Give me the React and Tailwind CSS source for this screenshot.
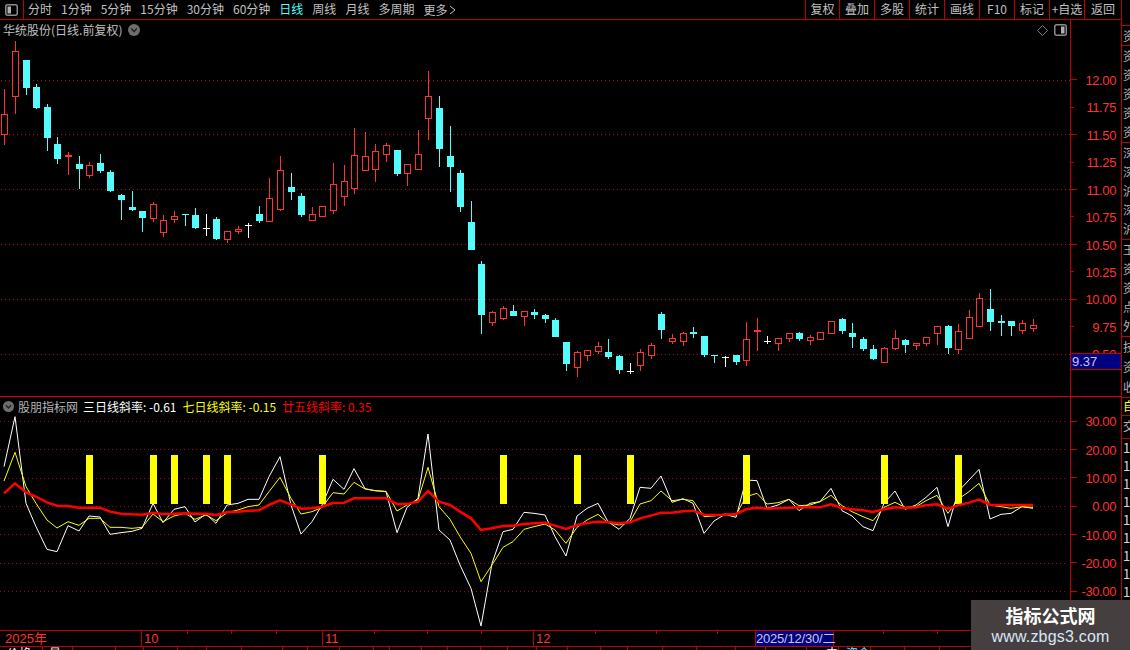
import React from 'react';

const CJK = { fontFamily: '"Noto Sans CJK SC", "Liberation Sans", sans-serif' };

// [kind, wick top, body top, body bottom, wick bottom], in thirds of a pixel
const CANDLES = [
  ['r', 267, 343, 404, 435], ['r', 123, 153, 290, 342], ['c', 180, 180, 264, 285], ['c', 252, 261, 324, 327],
  ['c', 312, 321, 414, 453], ['c', 411, 432, 477, 492], ['f', 456, 465, 471, 525], ['c', 468, 492, 507, 567],
  ['r', 486, 495, 528, 534], ['c', 462, 489, 513, 519], ['c', 510, 516, 573, 576], ['c', 582, 585, 600, 660],
  ['c', 573, 621, 630, 633], ['c', 633, 633, 654, 696], ['r', 606, 612, 657, 666], ['r', 645, 660, 699, 711],
  ['r', 633, 648, 660, 669], ['c', 642, 642, 645, 678], ['c', 624, 645, 684, 687], ['w', 642, 684, 687, 708],
  ['c', 651, 657, 717, 720], ['r', 693, 693, 720, 729], ['r', 678, 687, 696, 702], ['w', 669, 675, 678, 714],
  ['c', 618, 642, 663, 669], ['r', 534, 594, 666, 666], ['r', 468, 510, 630, 633], ['c', 519, 561, 576, 600],
  ['c', 579, 588, 645, 651], ['r', 621, 642, 663, 663], ['r', 618, 618, 651, 651], ['r', 489, 552, 633, 642],
  ['r', 495, 543, 591, 618], ['r', 384, 465, 567, 582], ['r', 396, 468, 513, 513], ['r', 432, 453, 510, 546],
  ['r', 429, 435, 465, 486], ['c', 450, 450, 522, 528], ['r', 492, 492, 522, 558], ['r', 390, 462, 510, 510],
  ['r', 213, 288, 357, 420], ['c', 288, 324, 447, 501], ['c', 378, 468, 501, 576], ['c', 510, 519, 621, 636],
  ['c', 603, 666, 750, 750], ['c', 783, 792, 945, 1002], ['r', 933, 936, 969, 978], ['r', 918, 924, 957, 960],
  ['c', 915, 933, 948, 948], ['r', 933, 933, 951, 978], ['c', 927, 936, 945, 957], ['c', 942, 945, 957, 969],
  ['c', 954, 960, 1011, 1011], ['c', 1026, 1026, 1092, 1113], ['r', 1053, 1056, 1103, 1131], ['r', 1051, 1051, 1068, 1083],
  ['r', 1026, 1038, 1056, 1062], ['c', 1017, 1056, 1071, 1077], ['c', 1065, 1068, 1110, 1122], ['w', 1089, 1113, 1116, 1122],
  ['r', 1047, 1057, 1097, 1113], ['r', 1030, 1036, 1067, 1077], ['c', 936, 942, 990, 1017], ['r', 1002, 1015, 1026, 1032],
  ['r', 997, 1000, 1026, 1038], ['c', 981, 996, 1002, 1014], ['c', 1008, 1008, 1065, 1071], ['c', 1065, 1065, 1068, 1089],
  ['w', 1068, 1071, 1074, 1101], ['c', 1065, 1065, 1086, 1095], ['r', 966, 1018, 1083, 1098], ['f', 954, 990, 996, 1053],
  ['w', 1008, 1023, 1026, 1032], ['r', 1015, 1015, 1031, 1053], ['r', 1000, 1000, 1016, 1026], ['c', 996, 1000, 1017, 1023],
  ['r', 1005, 1012, 1023, 1035], ['r', 997, 997, 1019, 1019], ['r', 963, 963, 1001, 1001], ['c', 954, 957, 993, 1002],
  ['c', 969, 999, 1011, 1044], ['c', 1011, 1017, 1047, 1053], ['c', 1035, 1047, 1077, 1080], ['r', 1042, 1045, 1088, 1088],
  ['r', 990, 1015, 1046, 1050], ['c', 1017, 1020, 1035, 1059], ['r', 1029, 1030, 1038, 1050], ['r', 1011, 1012, 1032, 1038],
  ['r', 978, 979, 1003, 1035], ['c', 975, 978, 1044, 1062], ['r', 972, 994, 1050, 1062], ['r', 930, 952, 1016, 1016],
  ['r', 879, 895, 980, 980], ['c', 867, 927, 966, 993], ['c', 945, 963, 969, 1008], ['c', 963, 963, 978, 1008],
  ['r', 960, 970, 993, 1002], ['r', 957, 976, 987, 996],
];

const WHITE = [230, 80, 340, 410, 478, 485, 407, 423, 378, 381, 433, 428, 424, 415, 340, 398, 358, 350, 396, 372, 400, 345, 340, 328, 328, 260, 200, 345, 432, 395, 345, 268, 298, 236, 296, 302, 305, 428, 352, 325, 132, 420, 450, 525, 595, 708, 520, 425, 418, 367, 370, 375, 440, 498, 378, 355, 340, 395, 418, 385, 292, 295, 258, 337, 326, 340, 430, 393, 373, 382, 270, 272, 355, 345, 328, 362, 340, 335, 295, 362, 378, 410, 422, 340, 303, 358, 345, 322, 292, 410, 305, 270, 238, 387, 373, 370, 350, 355];
const YELLOW = [273, 187, 290, 340, 390, 414, 395, 406, 385, 385, 412, 412, 415, 412, 372, 395, 378, 370, 388, 375, 392, 368, 360, 350, 345, 305, 262, 325, 372, 365, 352, 308, 312, 277, 297, 302, 304, 363, 345, 330, 232, 350, 388, 440, 490, 575, 525, 472, 455, 418, 410, 402, 420, 460, 412, 390, 373, 398, 405, 395, 342, 332, 303, 332, 328, 332, 380, 378, 372, 375, 320, 310, 342, 338, 328, 347, 345, 335, 316, 347, 365, 380, 392, 352, 337, 352, 350, 332, 316, 370, 328, 305, 280, 345, 350, 355, 350, 352];
const RED = [310, 280, 307, 320, 337, 347, 348, 353, 353, 353, 365, 371, 373, 374, 368, 372, 371, 370, 371, 371, 375, 367, 365, 362, 361, 345, 331, 343, 356, 355, 350, 339, 338, 325, 325, 325, 325, 342, 342, 335, 303, 335, 345, 365, 385, 420, 415, 408, 407, 402, 400, 398, 407, 417, 405, 399, 395, 396, 400, 397, 385, 377, 368, 368, 364, 362, 374, 375, 374, 372, 358, 353, 356, 355, 353, 352, 352, 352, 343, 354, 358, 361, 366, 358, 352, 354, 352, 346, 343, 356, 346, 338, 329, 344, 345, 345, 345, 345];
const SIGNALS = [8, 14, 16, 19, 21, 30, 47, 54, 59, 70, 83, 90];

const PERIODS = ['分时', '1分钟', '5分钟', '15分钟', '30分钟', '60分钟', '日线', '周线', '月线', '多周期'];
const ACTIONS = [['复权', 'w-[34px]'], ['叠加', 'w-[35px]'], ['多股', 'w-[35px]'], ['统计', 'w-[35px]'], ['画线', 'w-[35px]'], ['F10', 'w-[35px]'], ['标记', 'w-[35px]'], ['+自选', 'w-[35px]'], ['返回', 'w-[37px]']];
const PRICES = ['12.00', '11.75', '11.50', '11.25', '11.00', '10.75', '10.50', '10.25', '10.00', '9.75', '9.50'];
const LEVELS = ['30.00', '20.00', '10.00', '0.00', '-10.00', '-20.00', '-30.00'];
const TOP_TICKS = [187, 231, 276, 374, 427, 481, 595, 656, 717, 883, 937];
const CELLS = [43, 30, 43, 28, 34, 29, 35, 41, 25, 32, 34, 16, 32, 26, 33, 27, 29, 31, 33, 27, 35, 34, 39, 30, 41, 32, 32, 34, 35];
const BOTTOM_TEXT = { 0: ['价格', 'pl-[7px] text-white'], 1: ['量', 'pl-[6px] text-white'], 25: ['中', 'pl-[19px] text-white'], 26: ['资金', 'pl-[7px] text-[#54fcfc]'] };
const STRIP = [
  { text: ['资'], cls: 'h-[20px]' },
  { text: ['资', '资', '资', '资', '资'], cls: 'h-[97px]' },
  { text: ['深', '深', '沪', '深', '沪'], cls: 'h-[97px]' },
  { text: ['王', '资', '资', '点', '外'], cls: 'h-[97px]' },
  { text: ['技', '资', '收'], cls: 'h-[61px]' },
];

const candleX = (i) => Math.round(4.3 + 10.6 * i);
const points = (ys) => ys.map((y, i) => `${candleX(i)},${390 + y / 3}`).join(' ');

const PanelIcon = ({ side }) => (
  <svg width="13" height="12" viewBox="0 0 13 12">
    <rect x="0.75" y="0.75" width="11.5" height="10.5" rx="2" fill="none" stroke="#8c8c8c" strokeWidth="1.5" />
    <rect x={side === 'left' ? 2.5 : 7} y="2.5" width="3.5" height="7" fill="#b0b0b0" />
  </svg>
);

const ChevronDot = ({ size = 12 }) => (
  <svg width={size} height={size} viewBox="0 0 12 12">
    <circle cx="6" cy="6" r="6" fill="#6e6e6e" />
    <path d="M3.2 4.6 L6 7.6 L8.8 4.6" fill="none" stroke="#222" strokeWidth="1.4" />
  </svg>
);

const Candle = ({ candle, index }) => {
  const [kind, high, top, bottom, low] = candle;
  const x = candleX(index);
  const y1 = Math.round(top / 3);
  const y2 = Math.round(bottom / 3);
  const color = kind === 'c' ? '#54fcfc' : kind === 'w' ? '#ffffff' : '#ff3232';
  const wickTop = Math.round(high / 3);
  const wickBottom = Math.round(low / 3);
  return (
    <g>
      <rect x={x} y={wickTop} width="1" height={Math.max(wickBottom - wickTop, 1)} fill={color} />
      {kind === 'r' ? (
        <rect x={x - 3 + 0.5} y={y1 + 0.5} width="6" height={Math.max(y2 - y1 - 1, 1)} fill="#000" stroke={color} />
      ) : (
        <rect x={x - 3} y={y1} width="7" height={Math.max(y2 - y1, kind === 'f' ? 2 : 1)} fill={color} />
      )}
    </g>
  );
};

const Toolbar = () => (
  <div className="flex h-[20px] border-b border-[#c00000] text-[12px] leading-[18px] text-[#c0c0c0]" style={CJK}>
    <div className="flex w-[24px] items-center justify-center border-r border-[#c00000]">
      <PanelIcon side="left" />
    </div>
    <div className="ml-[4px] flex flex-1 gap-[9px]">
      {PERIODS.map((p) => (
        <span key={p} className={p === '日线' ? 'text-[#54fcfc]' : ''}>{p}</span>
      ))}
      <span className="flex items-center gap-[2px]">
        更多
        <svg width="7" height="10" viewBox="0 0 7 10"><path d="M1 1 L6 5 L1 9" fill="none" stroke="#c0c0c0" /></svg>
      </span>
    </div>
    {ACTIONS.map(([label, w]) => (
      <div key={label} className={`${w} border-l border-[#c00000] text-center whitespace-nowrap`}>{label}</div>
    ))}
  </div>
);

const MainChart = () => (
  <div className="relative w-[1070px]">
    <svg width="1070" height="376" viewBox="0 20 1070 376" shapeRendering="crispEdges" className="block">
      {[80, 134, 189, 244, 299, 354].map((y) => (
        <line key={y} x1="1" x2="1070" y1={y + 0.5} y2={y + 0.5} stroke="#b01010" strokeDasharray="1 3" />
      ))}
      {CANDLES.map((c, i) => <Candle key={i} candle={c} index={i} />)}
    </svg>
    <div className="absolute left-[3px] top-[1px] flex items-center gap-[6px] text-[12px] leading-[17px] text-[#c0c0c0]" style={CJK}>
      <span>华统股份(日线.前复权)</span>
      <ChevronDot />
    </div>
    <div className="absolute right-[3px] top-[4px] flex items-center gap-[6px]">
      <svg width="11" height="11" viewBox="0 0 11 11"><path d="M5.5 0.5 L10.5 5.5 L5.5 10.5 L0.5 5.5 Z" fill="none" stroke="#777" /></svg>
      <PanelIcon side="right" />
    </div>
  </div>
);

const PriceAxis = () => (
  <div className="relative w-[51px] border-l border-[#c00000] pt-[46px] text-[13px] tracking-[-0.4px] text-[#ff3232]" style={{ fontFamily: '"Liberation Sans", sans-serif' }}>
    {PRICES.map((p, i) => (
      <div key={p} className="flex h-[27.45px] items-center justify-between pr-[5px]">
        <span className={`h-px bg-[#c00000] ${i % 2 ? 'w-[3px]' : 'w-[6px]'}`} />
        <span className="mt-[2px]">{p}</span>
      </div>
    ))}
    <div className="absolute left-0 right-0 top-[333px] h-[17px] border-y border-[#c00000] bg-[#000080] pl-[1px] text-[13px] leading-[15px] tracking-normal text-[#c8c8e0]">9.37</div>
  </div>
);

const SubChart = () => (
  <div className="relative w-[1070px]">
    <svg width="1070" height="233" viewBox="0 397 1070 233" className="block">
      {[421, 449, 478, 506, 534, 563, 591].map((y) => (
        <line key={y} x1="0" x2="1068" y1={y + 0.5} y2={y + 0.5} stroke="#901010" strokeDasharray="1 3" shapeRendering="crispEdges" />
      ))}
      <polyline points={points(WHITE)} fill="none" stroke="#ffffff" strokeWidth="1" />
      <polyline points={points(YELLOW)} fill="none" stroke="#ffff00" strokeWidth="1" />
      {SIGNALS.map((i) => (
        <rect key={i} x={candleX(i) - 3} y="455" width="7" height="49" fill="#ffff00" shapeRendering="crispEdges" />
      ))}
      <polyline points={points(RED)} fill="none" stroke="#ff0000" strokeWidth="2.5" />
    </svg>
    <div className="absolute left-[3px] top-[2px] flex items-center gap-[6px] text-[12px] leading-[15px]" style={CJK}>
      <span className="mr-[-2px]"><ChevronDot size={11} /></span>
      <span className="mr-[-1px] text-[#b4b4b4]">股朋指标网</span>
      <span className="text-white">三日线斜率: -0.61</span>
      <span className="text-[#ffff00]">七日线斜率: -0.15</span>
      <span className="text-[#ff0000]">廿五线斜率: 0.35</span>
    </div>
  </div>
);

const LevelAxis = () => (
  <div className="w-[51px] border-l border-[#c00000] pt-[10px] text-[13px] tracking-[-0.4px] text-[#ff3232]" style={{ fontFamily: '"Liberation Sans", sans-serif' }}>
    {LEVELS.map((l) => (
      <div key={l} className="flex h-[28.33px] items-center justify-between pr-[5px]">
        <span className="h-px w-[6px] bg-[#c00000]" />
        <span className="mt-[2px]">{l}</span>
      </div>
    ))}
  </div>
);

const TimeAxis = () => (
  <div className="relative flex h-[16px] border-t border-[#c00000] text-[13px] leading-[15px] text-[#ff3232]" style={{ fontFamily: '"Liberation Sans", "Noto Sans CJK SC", sans-serif' }}>
    <div className="w-[141px] pl-[5px]">2025年</div>
    <div className="w-[181px] border-l border-[#c00000] pl-[2px]">10</div>
    <div className="w-[211px] border-l border-[#c00000] pl-[2px]">11</div>
    <div className="w-[222px] border-l border-[#c00000] pl-[2px]">12</div>
    <div className="w-[79px] border-x border-[#c00000] bg-[#000080] text-center tracking-[-0.2px] whitespace-nowrap text-[#c8c8e0]">2025/12/30/二</div>
    <svg width="1070" height="3" className="absolute left-0 top-0" shapeRendering="crispEdges">
      {TOP_TICKS.map((x) => <rect key={x} x={x} y="0" width="1" height="3" fill="#c00000" />)}
    </svg>
  </div>
);

const BottomRow = () => (
  <div className="flex h-[4px] overflow-hidden border-t border-[#c00000] text-[12px] leading-[12px]" style={CJK}>
    {CELLS.map((w, i) => (
      <div key={i} style={{ width: w }} className={`border-r border-[#c00000] whitespace-nowrap ${BOTTOM_TEXT[i] ? BOTTOM_TEXT[i][1] : ''}`}>
        {BOTTOM_TEXT[i] ? BOTTOM_TEXT[i][0] : ''}
      </div>
    ))}
  </div>
);

const SideStrip = () => (
  <div className="w-[9px] shrink-0 overflow-hidden border-l border-[#c00000] pt-[25px] text-[12px] text-[#b4b4b4]" style={CJK}>
    {STRIP.map((cell, i) => (
      <div key={i} className={`${cell.cls} flex flex-col justify-around overflow-hidden border-t border-[#c00000] pl-[1px] leading-[16px]`}>
        {cell.text.map((t, j) => <span key={j}>{t}</span>)}
      </div>
    ))}
    <div className="h-[18px] overflow-hidden border-t border-[#c00000] pl-[1px] leading-[16px] text-[#ffff00]">自</div>
    <div className="h-[23px] overflow-hidden border-t border-[#c00000] pl-[1px] leading-[20px]">交</div>
    <div className="flex flex-col gap-[3px] border-t border-[#c00000] pl-[1px] pt-[1px] text-[13px] leading-[15px] text-[#d8d8d8]">
      {[0, 1, 2, 3, 4, 5, 6, 7, 8, 9, 10].map((n) => <span key={n}>1</span>)}
    </div>
  </div>
);

export default function App() {
  return (
    <div className="relative flex h-[650px] w-[1130px] overflow-hidden bg-black">
      <div className="flex w-[1121px] flex-col">
        <Toolbar />
        <div className="flex h-[376px]">
          <MainChart />
          <PriceAxis />
        </div>
        <div className="flex h-[234px] border-t border-[#d80000]">
          <SubChart />
          <LevelAxis />
        </div>
        <TimeAxis />
        <BottomRow />
      </div>
      <SideStrip />

      {/* site watermark over the bottom right corner */}
      <div className="absolute bottom-0 right-0 flex h-[50px] w-[159px] flex-col items-center bg-[#453f3f] pt-[2px]">
        <span className="text-[18px] leading-[26px] font-bold text-white" style={CJK}>指标公式网</span>
        <span className="text-[16px] leading-[17px] font-medium tracking-[0.2px] text-[#d8e6fa]" style={{ fontFamily: '"Liberation Sans", sans-serif' }}>www.zbgs3.com</span>
      </div>
    </div>
  );
}
